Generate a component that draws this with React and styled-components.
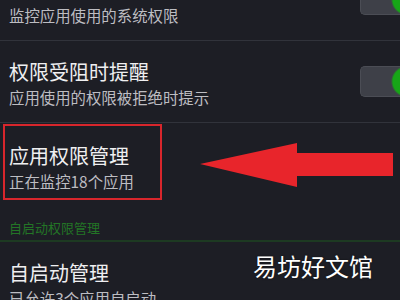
import React from "react";
import styled, { createGlobalStyle } from "styled-components";

const GlobalStyle = createGlobalStyle`
  html, body {
    margin: 0;
    padding: 0;
    width: 400px;
    height: 300px;
    overflow: hidden;
    background: #1d1e25;
  }
  body {
    font-family: "Noto Sans CJK SC", "Noto Sans", sans-serif;
  }
`;

const Screen = styled.div`
  position: relative;
  width: 400px;
  height: 300px;
  overflow: hidden;
  background: #1d1e25;
`;

const List = styled.div`
  display: flex;
  flex-direction: column;
  margin-top: -41px;
`;

const Row = styled.div`
  position: relative;
  display: flex;
  align-items: flex-start;
  height: 82px;
  box-sizing: border-box;
  padding: ${(p) => p.$pad || "19px 0 0 9px"};
  border-bottom: ${(p) => (p.$divider ? "1px solid #31333b" : "none")};
`;

const TextBlock = styled.div`
  display: flex;
  flex-direction: column;
`;

const Highlight = styled.div`
  display: flex;
  flex-direction: column;
  width: 159px;
  height: 76px;
  box-sizing: border-box;
  border: 2px solid #d8262c;
  padding: 18px 0 0 4px;
`;

const Title = styled.div`
  color: #efeff1;
  font-size: 20px;
  line-height: 24px;
  white-space: nowrap;
`;

const Subtitle = styled.div`
  color: #bdbdc2;
  font-size: 15.4px;
  line-height: 26px;
  white-space: nowrap;
`;

const Toggle = styled.div`
  position: absolute;
  right: 0;
  top: 25px;
  width: 40px;
  height: 31px;
  border-radius: 5px 0 0 5px;
  background: radial-gradient(circle at 46px 50%, #17a617 0 14px, transparent 16px),
    #3e4048;
  border: 1px solid #4b4d55;
  border-right: none;
  box-sizing: border-box;
`;

const SectionHeader = styled.div`
  height: 37px;
  box-sizing: border-box;
  padding: 15px 0 0 9px;
  color: #237526;
  font-size: 13px;
  line-height: 16px;
  border-bottom: 2px solid #1d3a22;
`;

const Arrow = styled.svg`
  position: absolute;
  left: 200px;
  top: 20px;
  width: 194px;
  height: 45px;
`;

const Watermark = styled.div`
  position: absolute;
  left: 253px;
  top: 252px;
  color: #ffffff;
  font-size: 24px;
  line-height: 28px;
  text-shadow: 0 0 2px rgba(0, 0, 0, 0.6);
`;

const App = () => {
  return (
    <Screen>
      <GlobalStyle />
      <List>
        <Row $divider $pad="43px 0 0 9px">
          <TextBlock>
            <Subtitle>监控应用使用的系统权限</Subtitle>
          </TextBlock>
          <Toggle />
        </Row>
        <Row $divider>
          <TextBlock>
            <Title>权限受阻时提醒</Title>
            <Subtitle>应用使用的权限被拒绝时提示</Subtitle>
          </TextBlock>
          <Toggle />
        </Row>
        <Row $pad="1px 0 0 3px">
          <Highlight>
            <Title>应用权限管理</Title>
            <Subtitle>正在监控18个应用</Subtitle>
          </Highlight>
          <Arrow viewBox="0 0 194 45">
            <polygon
              points="0,21 97,0 97,10 193,10 193,33 97,33 97,44"
              fill="#e8252b"
            />
          </Arrow>
        </Row>
        <SectionHeader>自启动权限管理</SectionHeader>
        <Row>
          <TextBlock>
            <Title>自启动管理</Title>
            <Subtitle>已允许3个应用自启动</Subtitle>
          </TextBlock>
        </Row>
      </List>
      <Watermark>易坊好文馆</Watermark>
    </Screen>
  );
};

export default App;
